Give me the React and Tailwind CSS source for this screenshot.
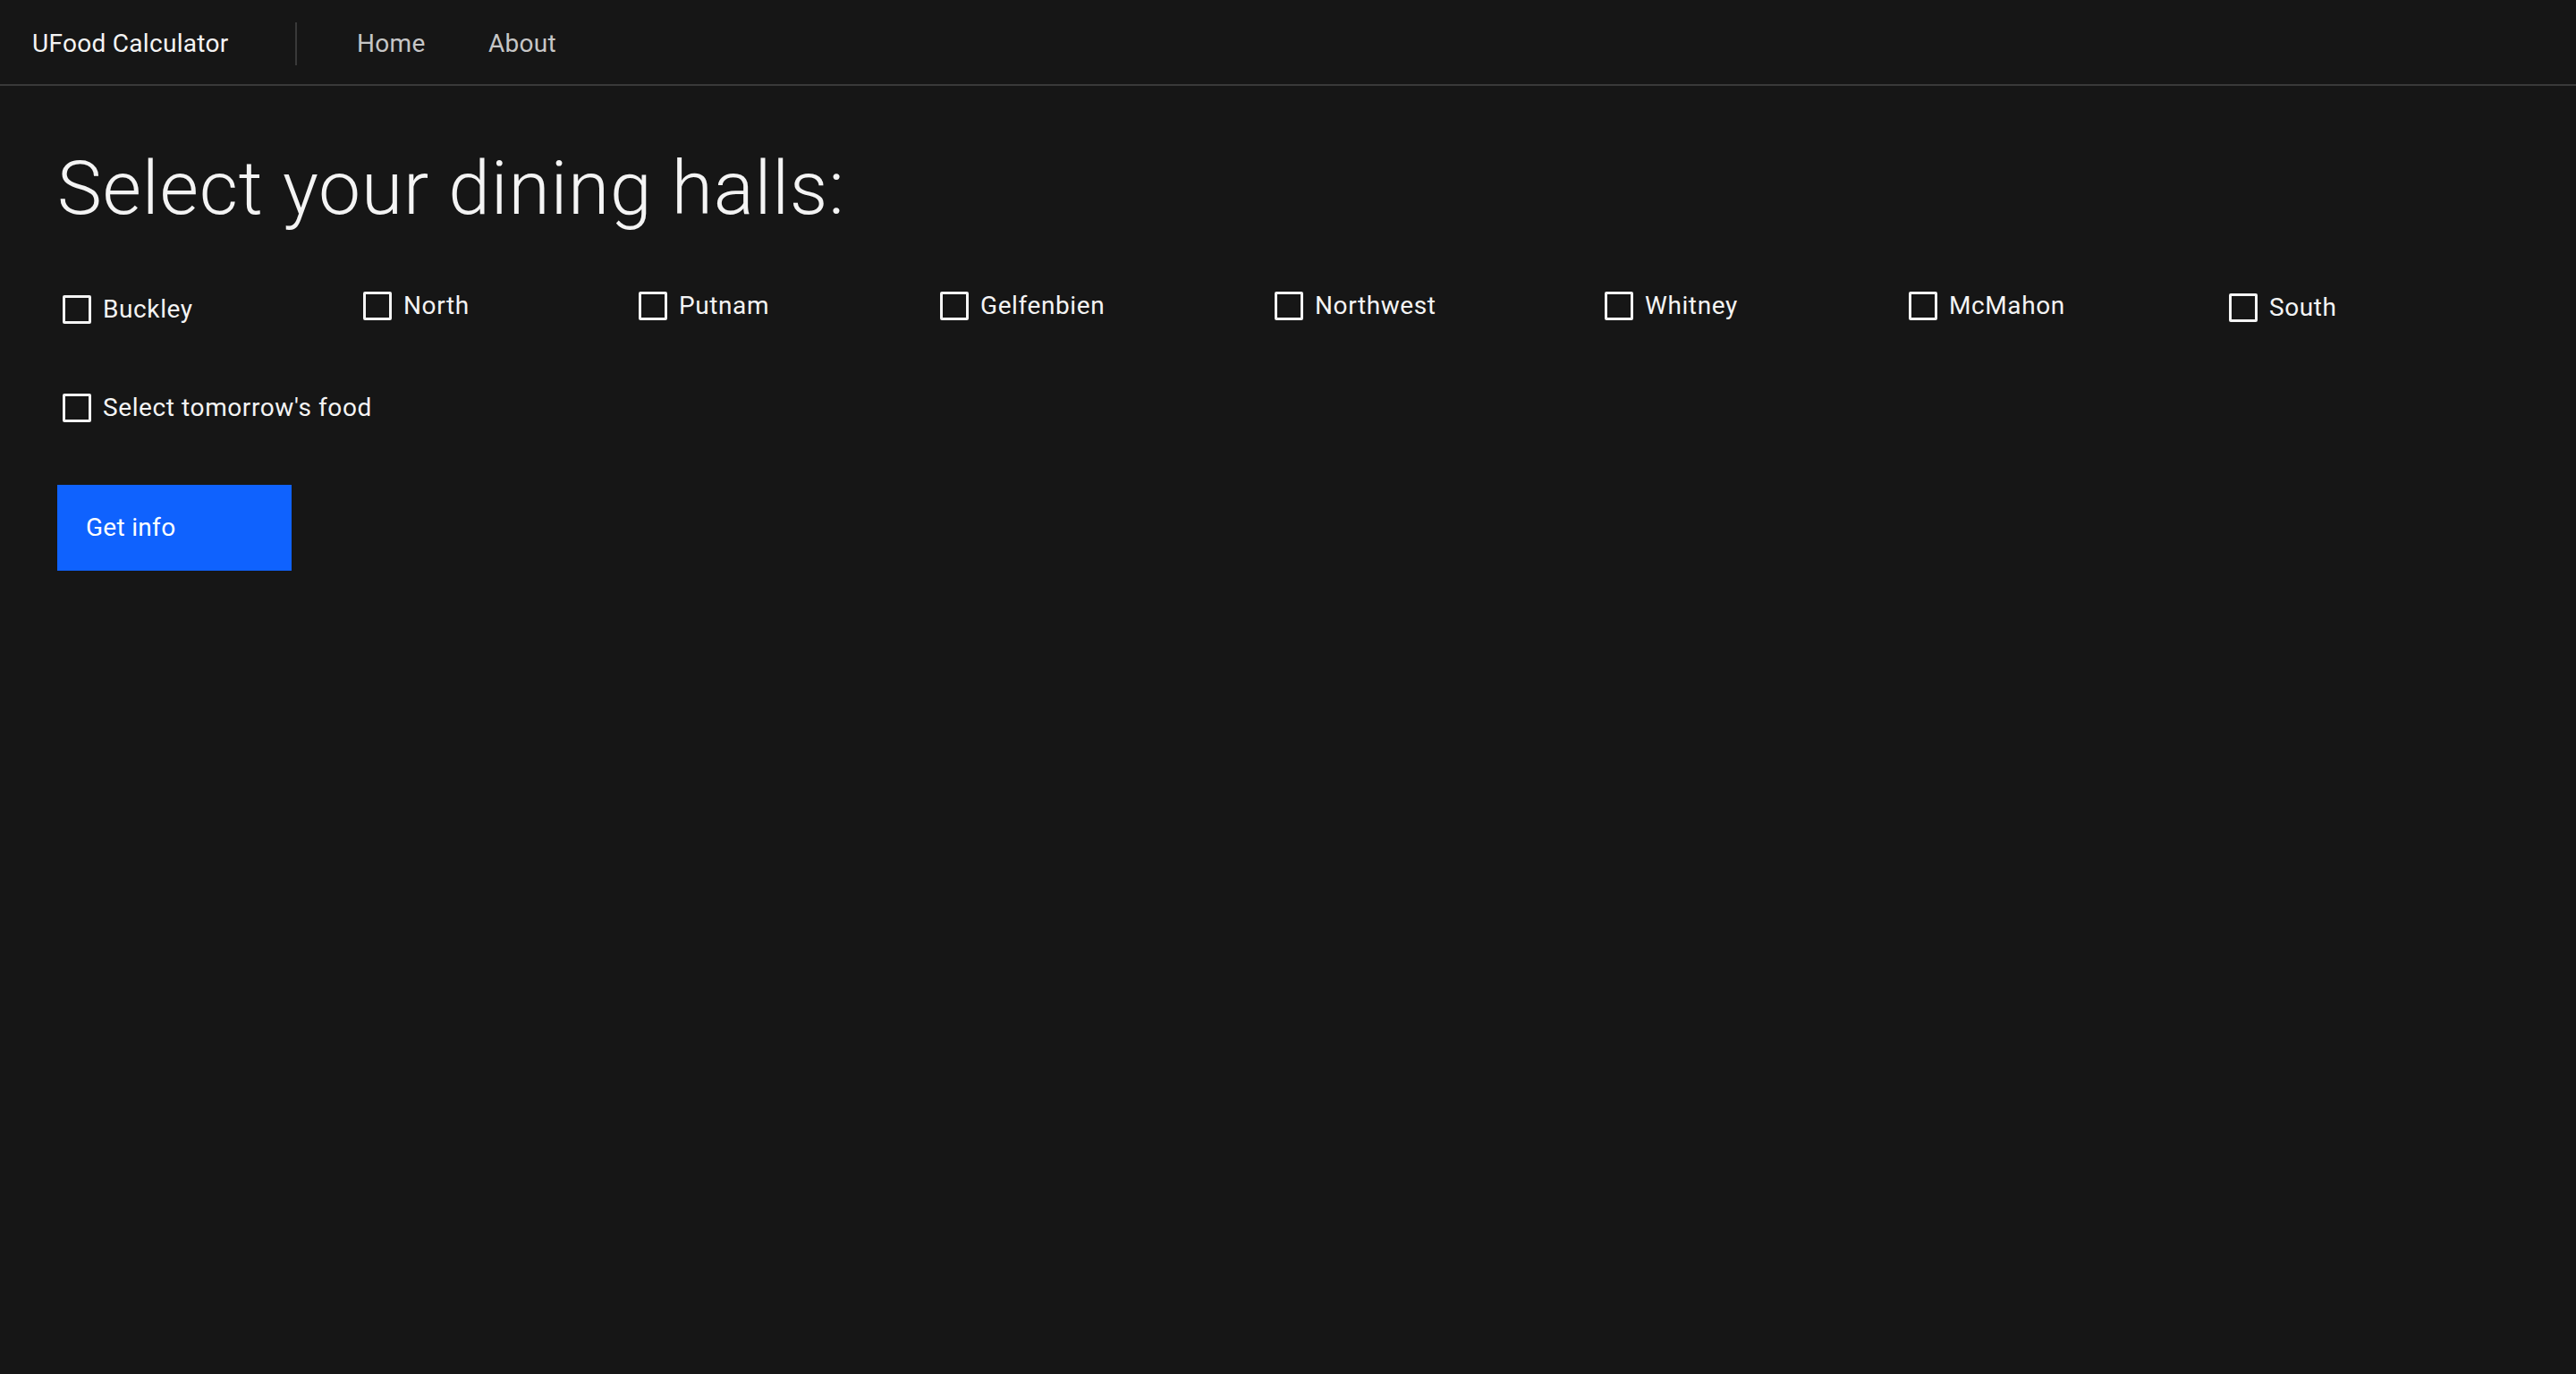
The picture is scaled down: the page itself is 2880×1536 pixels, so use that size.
import { useState } from 'react'

const halls = [
  { name: 'Buckley', w: 'w-[336px]', off: 'mt-[4px]' },
  { name: 'North', w: 'w-[308px]', off: '' },
  { name: 'Putnam', w: 'w-[337px]', off: '' },
  { name: 'Gelfenbien', w: 'w-[374px]', off: '' },
  { name: 'Northwest', w: 'w-[369px]', off: '' },
  { name: 'Whitney', w: 'w-[340px]', off: '' },
  { name: 'McMahon', w: 'w-[358px]', off: '' },
  { name: 'South', w: 'w-auto', off: 'mt-[2px]' },
]

function Check({ label, checked, onChange }) {
  return (
    <label className="flex cursor-pointer items-center gap-[13px] pl-[6px]">
      <span
        onClick={onChange}
        className="flex h-[32px] w-[32px] shrink-0 items-center justify-center rounded-[2px] border-[3px] border-[#f4f4f4]"
      >
        {checked && (
          <svg viewBox="0 0 16 16" className="h-[22px] w-[22px]" fill="none" stroke="#f4f4f4" strokeWidth="2">
            <path d="M3 8l3.5 3.5L13 5" />
          </svg>
        )}
      </span>
      <span className="text-[28px] leading-none tracking-[0.6px] text-[#f4f4f4]">{label}</span>
    </label>
  )
}

export default function App() {
  const [picked, setPicked] = useState({})
  const [tomorrow, setTomorrow] = useState(false)

  const toggle = (name) => setPicked((p) => ({ ...p, [name]: !p[name] }))

  return (
    <div className="min-h-screen w-full bg-[#161616] font-['Roboto','Liberation_Sans',sans-serif]">
      <header className="flex h-[96px] items-center border-b-2 border-[#393939] pt-[4px]">
        <div className="w-[330px] pl-[36px] text-[28px] leading-none tracking-[0.3px] text-[#f4f4f4]">UFood Calculator</div>
        <div className="h-[48px] w-[2px] bg-[#393939]" />
        <nav className="ml-[67px] flex items-center text-[28px] leading-none tracking-[0.3px] text-[#c6c6c6]">
          <a className="w-[147px]">Home</a>
          <a>About</a>
        </nav>
      </header>

      <main className="px-[64px]">
        <h1 className="mt-[73px] text-[84px] font-light leading-none tracking-[0.8px] text-[#f4f4f4]">Select your dining halls:</h1>

        <div className="mt-[73px] flex items-start">
          {halls.map((h) => (
            <div key={h.name} className={`shrink-0 ${h.w} ${h.off}`}>
              <Check label={h.name} checked={!!picked[h.name]} onChange={() => toggle(h.name)} />
            </div>
          ))}
        </div>

        <div className="mt-[78px]">
          <Check label="Select tomorrow's food" checked={tomorrow} onChange={() => setTomorrow(!tomorrow)} />
        </div>

        <button className="mt-[70px] flex h-[96px] w-[262px] items-center bg-[#0f62fe] pl-[32px] text-left text-[28px] leading-none tracking-[0.3px] text-white">
          Get info
        </button>
      </main>
    </div>
  )
}
